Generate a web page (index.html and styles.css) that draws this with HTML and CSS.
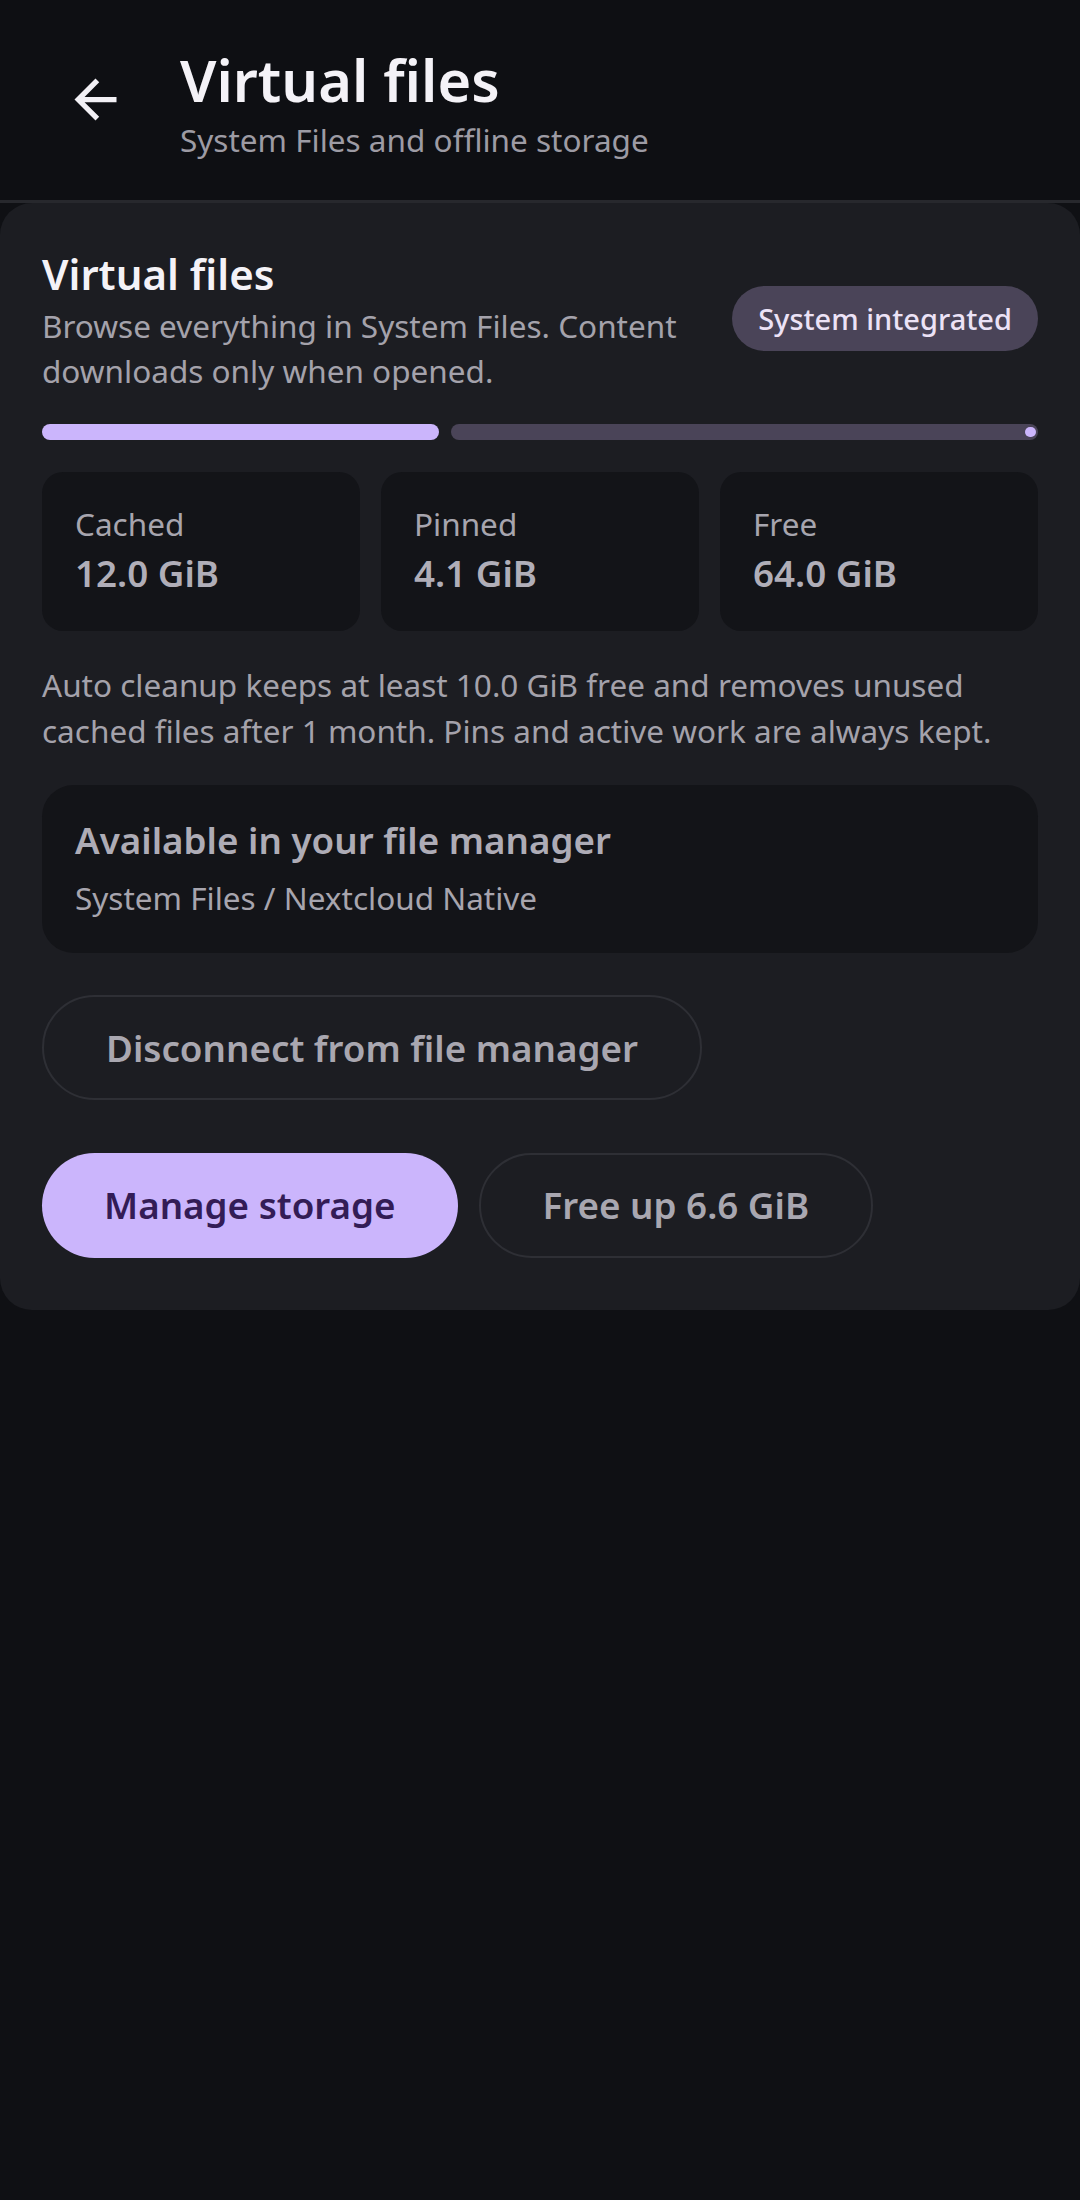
FILE: index.html
```html
<!DOCTYPE html>
<html lang="en">

<head>
    <meta charset="UTF-8">
    <meta name="viewport" content="width=device-width, initial-scale=1.0">
    <title>Virtual files</title>
    <link rel="stylesheet" href="styles.css">
</head>

<body>
    <header class="topbar">
        <button class="back-btn" aria-label="Back">
            <svg viewBox="0 0 24 24" width="63" height="63">
                <path d="M20 11H7.83l5.59-5.59L12 4l-8 8 8 8 1.41-1.41L7.83 13H20v-2z" fill="currentColor" />
            </svg>
        </button>
        <div class="topbar-text">
            <h1>Virtual files</h1>
            <p>System Files and offline storage</p>
        </div>
    </header>

    <main class="card">
        <div class="card-head">
            <div class="card-head-text">
                <h2>Virtual files</h2>
                <p>Browse everything in System Files. Content downloads only when opened.</p>
            </div>
            <span class="chip">System integrated</span>
        </div>

        <div class="progress">
            <div class="progress-fill" style="width: 39.9%"></div>
            <div class="progress-track">
                <span class="progress-stop"></span>
            </div>
        </div>

        <div class="stats">
            <div class="stat">
                <span class="stat-label">Cached</span>
                <span class="stat-value">12.0 GiB</span>
            </div>
            <div class="stat">
                <span class="stat-label">Pinned</span>
                <span class="stat-value">4.1 GiB</span>
            </div>
            <div class="stat">
                <span class="stat-label">Free</span>
                <span class="stat-value">64.0 GiB</span>
            </div>
        </div>

        <p class="note">Auto cleanup keeps at least 10.0 GiB free and removes unused cached files after 1 month. Pins and active work are always kept.</p>

        <div class="location">
            <h3>Available in your file manager</h3>
            <p>System Files / Nextcloud Native</p>
        </div>

        <div class="btn-row">
            <button class="btn btn-outline">Disconnect from file manager</button>
        </div>

        <div class="btn-row">
            <button class="btn btn-filled">Manage storage</button>
            <button class="btn btn-outline">Free up 6.6 GiB</button>
        </div>
    </main>
</body>

</html>
```

FILE: styles.css
```css
body {
    margin: 0;
    background-color: #0f1014;
    font-family: "Noto Sans", "Open Sans", sans-serif;
    color: #a9a7b0;
}

h1,
h2,
h3,
p {
    margin: 0;
}

/* Top app bar */
.topbar {
    height: 200px;
    display: flex;
    align-items: flex-start;
    border-bottom: 3px solid #27282d;
    background-color: #0e0f13;
}

.back-btn {
    margin: 68px 0 0 64px;
    width: 63px;
    height: 63px;
    padding: 0;
    border: none;
    background: none;
    color: #f2f0f5;
    cursor: pointer;
}

.back-btn svg {
    display: block;
}

.topbar-text {
    margin: 43px 0 0 53px;
}

.topbar-text h1 {
    font-size: 57.75px;
    line-height: 73.5px;
    font-weight: 600;
    color: #f4f2f7;
}

.topbar-text p {
    margin-top: 2px;
    font-size: 31.5px;
    line-height: 42px;
    color: #9d9ba4;
}

/* Card */
.card {
    display: flex;
    flex-direction: column;
    gap: 31.5px;
    padding: 42px;
    background-color: #1c1d22;
    border-radius: 32px;
}

.card-head {
    display: flex;
    align-items: center;
    gap: 21px;
}

.card-head-text {
    flex: 1;
}

.card-head-text h2 {
    font-size: 42px;
    line-height: 57.75px;
    font-weight: 600;
    color: #f4f2f7;
}

.card-head-text p {
    font-size: 31.5px;
    line-height: 45px;
    color: #a4a2ab;
}

.note {
    font-size: 31.5px;
    line-height: 45.5px;
    color: #a4a2ab;
}

.chip {
    height: 65px;
    padding: 0 26px;
    display: flex;
    align-items: center;
    border-radius: 33px;
    background-color: #4a4458;
    color: #ece2f6;
    font-size: 29px;
    font-weight: 500;
}

/* Progress */
.progress {
    display: flex;
    gap: 12px;
    height: 15.75px;
}

.progress-fill {
    background-color: #cbb5fc;
    border-radius: 8px;
}

.progress-track {
    position: relative;
    flex: 1;
    background-color: #4a4458;
    border-radius: 8px;
}

.progress-stop {
    position: absolute;
    right: 2.5px;
    top: 2.6px;
    width: 10.5px;
    height: 10.5px;
    border-radius: 50%;
    background-color: #cbb5fc;
}

/* Stats */
.stats {
    display: grid;
    grid-template-columns: repeat(3, 1fr);
    gap: 21px;
}

.stat {
    display: flex;
    flex-direction: column;
    padding: 31.5px 33px;
    background-color: #131418;
    border-radius: 21px;
}

.stat-label {
    font-size: 31.5px;
    line-height: 42px;
    color: #a7a5ae;
}

.stat-value {
    margin-top: 1.5px;
    font-size: 36.75px;
    line-height: 52.5px;
    font-weight: 600;
    color: #b0aeb8;
}

/* Location box */
.location {
    padding: 32px 33px 31.5px;
    background-color: #131418;
    border-radius: 31.5px;
}

.location h3 {
    font-size: 36.75px;
    line-height: 47.25px;
    font-weight: 600;
    color: #aeacb6;
}

.location p {
    margin-top: 10.5px;
    font-size: 31.5px;
    line-height: 47.25px;
    color: #a7a5ae;
}

/* Buttons */
.btn-row {
    display: flex;
    gap: 21px;
    padding: 10.5px 0;
}

.btn {
    height: 105px;
    padding: 0 62px;
    border-radius: 53px;
    font-family: inherit;
    font-size: 36.75px;
    font-weight: 600;
    cursor: pointer;
}

.btn-outline {
    background: none;
    border: 2.6px solid #2e2f35;
    color: #a9a7b0;
}

.btn-filled {
    background-color: #cbb5fc;
    border: none;
    color: #331c56;
}
```
